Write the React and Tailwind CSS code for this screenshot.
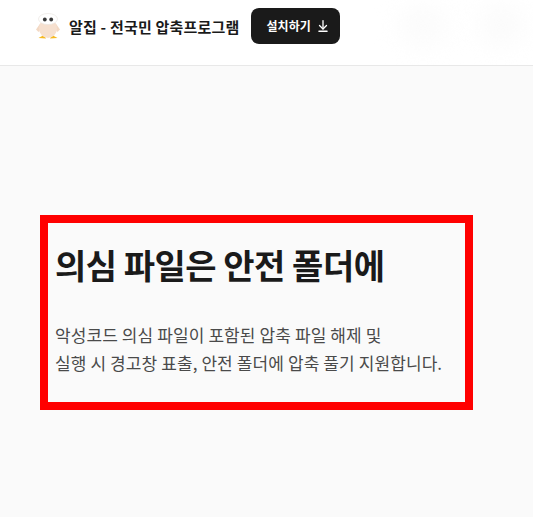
import { ArrowDownToLine } from "lucide-react";

const font = { fontFamily: '"Noto Sans CJK KR", sans-serif' };

function Logo() {
  return (
    <svg width="26" height="28" viewBox="0 0 26 28" className="shrink-0">
      <path d="M3.5 26 L9 23 L11 26.5 Z" fill="#f5b921" />
      <path d="M22.5 26 L17 23 L15 26.5 Z" fill="#f5b921" />
      <path d="M5.5 11 L1 17.5 L3.5 20 L7 16 Z" fill="#f3d9c4" />
      <path d="M20.5 11 L25 17.5 L22.5 20 L19 16 Z" fill="#f3d9c4" />
      <ellipse cx="13" cy="16.5" rx="9" ry="9.5" fill="#f6e0cf" />
      <ellipse cx="13" cy="7" rx="9.5" ry="5.5" fill="#ffffff" stroke="#e8e2dd" strokeWidth="0.6" />
      <circle cx="9.8" cy="7.5" r="1.9" fill="#3a3a3a" />
      <circle cx="16.2" cy="7.5" r="1.9" fill="#3a3a3a" />
    </svg>
  );
}

export default function App() {
  return (
    <div className="min-h-[517px] bg-[#fafafa]" style={font}>
      <header className="relative h-[66px] overflow-hidden bg-white border-b border-[#e8e8e8]">
        <div className="absolute left-[400px] top-[5px] w-[46px] h-[42px] rounded-full bg-[#fbfbfb] blur-md"></div>
        <div className="absolute left-[478px] top-[4px] w-[46px] h-[42px] rounded-full bg-[#fbfbfb] blur-md"></div>
        <div className="relative flex items-center h-[52px] pl-[35px]">
          <Logo />
          <span className="ml-[8px] text-[15px] font-bold tracking-[0.2px] text-[#1a1a1a] leading-none">
            알집 - 전국민 압축프로그램
          </span>
          <button className="ml-[11px] flex items-center gap-[5px] h-[36px] pl-[16px] pr-[10px] rounded-lg bg-[#1a1a1a] text-white text-[12px] font-bold">
            설치하기
            <ArrowDownToLine size={14} strokeWidth={2.25} />
          </button>
        </div>
      </header>
      <main className="pt-[149px] pl-[40px]">
        <section className="w-[433px] h-[195px] border-[8px] border-[#ff0000] pl-[7px] pt-[19px]">
          <h1 className="text-[34px] leading-[46px] font-bold tracking-[-0.5px] text-[#1a1a1a]">
            의심 파일은 안전 폴더에
          </h1>
          <p className="mt-[33px] text-[17px] leading-[28px] tracking-[0.1px] text-[#4a4a4a]">
            악성코드 의심 파일이 포함된 압축 파일 해제 및
            <br />
            실행 시 경고창 표출, 안전 폴더에 압축 풀기 지원합니다.
          </p>
        </section>
      </main>
    </div>
  );
}
